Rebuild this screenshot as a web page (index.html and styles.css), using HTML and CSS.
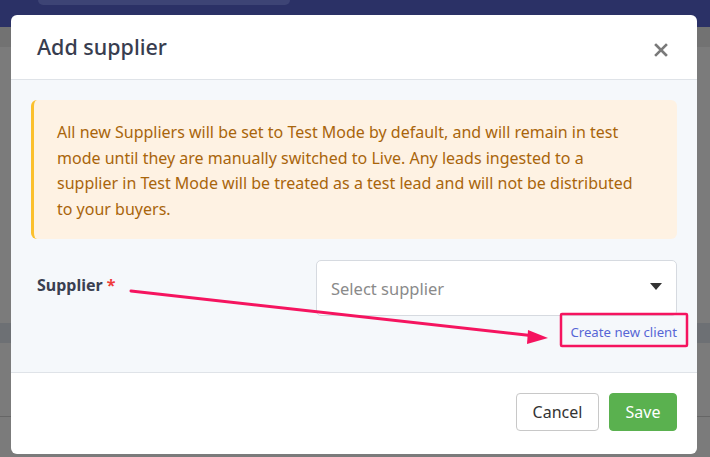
FILE: index.html
```html
<!DOCTYPE html>
<html>
<head>
<meta charset="utf-8">
<link rel="stylesheet" href="styles.css">
</head>
<body>
<div class="page">
  <div class="topbar"><div class="search"></div></div>
  <div class="backdrop">
    <div class="band band-a"></div>
    <div class="band band-b"></div>
    <div class="line line-c"></div>
  </div>

  <div class="modal">
    <div class="modal-header">
      <h1 class="modal-title">Add supplier</h1>
      <button class="close" aria-label="Close">
        <svg width="14" height="14" viewBox="0 0 14 14"><path d="M2 2L12 12M12 2L2 12" stroke="#7a7a7a" stroke-width="2.6" stroke-linecap="square"/></svg>
      </button>
    </div>
    <div class="modal-body">
      <div class="alert">All new Suppliers will be set to Test Mode by default, and will remain in test mode until they are manually switched to Live. Any leads ingested to a supplier in Test Mode will be treated as a test lead and will not be distributed to your buyers.</div>
      <div class="form-row">
        <label class="label">Supplier <span class="req">*</span></label>
        <div class="field">
          <div class="select">
            <span class="placeholder">Select supplier</span>
            <svg class="caret" width="12" height="7" viewBox="0 0 12 7"><path d="M0 0H12L6 7Z" fill="#333"/></svg>
          </div>
          <a class="link" href="#">Create new client</a>
        </div>
      </div>
    </div>
    <div class="modal-footer">
      <button class="btn btn-cancel">Cancel</button>
      <button class="btn btn-save">Save</button>
    </div>
  </div>

  <svg class="annotation" width="710" height="457" viewBox="0 0 710 457">
    <line x1="131" y1="291" x2="535" y2="336" stroke="#f5145f" stroke-width="3" stroke-linecap="round"/>
    <path d="M548 338L528 330L527 344Z" fill="#f5145f"/>
    <rect x="561" y="314" width="126" height="32" rx="1" fill="none" stroke="#f5145f" stroke-width="2.5"/>
  </svg>
</div>
</body>
</html>
```

FILE: styles.css
```css
* { box-sizing: border-box; }
html, body { margin: 0; padding: 0; }
body {
  width: 710px;
  height: 457px;
  overflow: hidden;
  font-family: "Noto Sans", "Open Sans", sans-serif;
}
.page {
  position: relative;
  width: 710px;
  height: 457px;
  background: #7b7b7b;
}
.topbar {
  height: 27px;
  background: #2b3166;
  padding-left: 38px;
}
.search {
  width: 252px;
  height: 5px;
  background: #3d4475;
  border-radius: 0 0 6px 6px;
}
.backdrop { position: relative; }
.band { background: #6d7074; height: 20px; }
.band-a { margin-top: 0; background: #727272; }
.band-b { margin-top: 276px; }
.line-c { margin-top: 73px; height: 1px; background: #666; }

.modal {
  position: absolute;
  left: 11px;
  top: 15px;
  width: 686px;
  height: 439px;
  background: #fff;
  border-radius: 6px;
  display: flex;
  flex-direction: column;
  overflow: hidden;
}
.modal-header {
  height: 65px;
  border-bottom: 1px solid #dfe3e8;
  display: flex;
  align-items: center;
  justify-content: space-between;
  padding: 0 29px 0 26px;
}
.modal-title {
  margin: 0;
  font-size: 21.5px;
  font-weight: 500;
  color: #383d4f;
  padding-bottom: 2px;
}
.close {
  border: 0;
  background: none;
  padding: 0;
  margin-top: 6px;
  display: flex;
}
.modal-body {
  background: #f5f8fb;
  height: 293px;
  padding: 20px 20px 0 20px;
  border-bottom: 1px solid #dfe3e8;
}
.alert {
  background: #fef2e3;
  border-left: 3px solid #fbc02d;
  border-radius: 6px;
  color: #a9650b;
  font-size: 16px;
  line-height: 25.5px;
  padding: 20px 30px 16px 23px;
  height: 139px;
}
.form-row {
  display: flex;
  margin-top: 21px;
}
.label {
  width: 285px;
  padding-left: 6px;
  padding-top: 14px;
  font-size: 16px;
  font-weight: 700;
  color: #3a3f51;
}
.req { color: #ef3b3b; font-weight: 700; }
.field {
  flex: 1;
  display: flex;
  flex-direction: column;
  align-items: flex-end;
}
.select {
  width: 100%;
  height: 56px;
  background: #fff;
  border: 1px solid #d6dae0;
  border-radius: 5px;
  display: flex;
  align-items: center;
  justify-content: space-between;
  padding: 0 14px 0 14px;
}
.placeholder {
  color: #8a8a8a;
  font-size: 16.5px;
}
.caret { margin-top: -4px; }
.link {
  margin-top: 7px;
  font-size: 13.2px;
  color: #5766d6;
  text-decoration: none;
}
.modal-footer {
  flex: 1;
  display: flex;
  justify-content: flex-end;
  align-items: flex-start;
  gap: 10px;
  padding: 20px 20px 0 0;
}
.btn {
  height: 38px;
  font-family: "Noto Sans", "Open Sans", sans-serif;
  font-size: 16px;
  border-radius: 4px;
  padding: 0;
}
.btn-cancel {
  width: 83px;
  background: #fff;
  border: 1px solid #c8c8c8;
  color: #333;
}
.btn-save {
  width: 68px;
  background: #5ab14f;
  border: 1px solid #5ab14f;
  color: #fff;
}
.annotation {
  position: absolute;
  left: 0;
  top: 0;
  pointer-events: none;
}
```
